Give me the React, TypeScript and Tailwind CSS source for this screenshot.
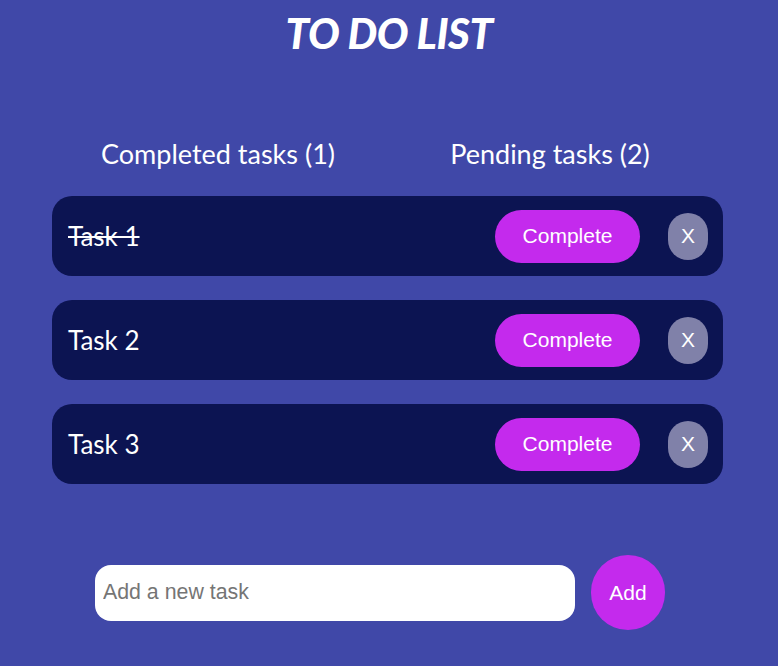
import React from "react";

const tasks = [
  { name: "Task 1", done: true },
  { name: "Task 2", done: false },
  { name: "Task 3", done: false },
];

export default function App() {
  return (
    <div className="min-h-[666px] bg-[#4048a8] text-white font-['Lato',sans-serif]">
      <h1 className="pt-[10px] text-center text-[42px] font-black italic leading-[46px] tracking-[-0.5px]">
        TO DO LIST
      </h1>
      <div className="ml-[52px] mr-[55px] mt-[82px]">
        <div className="flex gap-[32px] pl-[16px] text-[27px] leading-[32px]">
          <div className="w-[300px] text-center">Completed tasks (1)</div>
          <div className="w-[300px] text-center">Pending tasks (2)</div>
        </div>
        <div className="mt-[26px] flex flex-col gap-[24px]">
          {tasks.map((t) => (
            <div
              key={t.name}
              className="flex h-[80px] items-center rounded-[20px] bg-[#0c1452] pl-[16px] pr-[15px]"
            >
              <span
                className={
                  "flex-1 text-[26px] " + (t.done ? "line-through" : "")
                }
              >
                {t.name}
              </span>
              <button className="h-[53px] w-[145px] rounded-full bg-[#c42aed] font-['Liberation_Sans',Arial,sans-serif] text-[21px] text-white">
                Complete
              </button>
              <button className="ml-[28px] h-[47px] w-[40px] rounded-[20px] bg-[#8081a9] font-['Liberation_Sans',Arial,sans-serif] text-[21px] text-white">
                X
              </button>
            </div>
          ))}
        </div>
      </div>
      <div className="mt-[71px] flex items-center gap-[16px] pl-[95px]">
        <input
          placeholder="Add a new task"
          className="h-[56px] w-[480px] rounded-[16px] bg-white px-[8px] font-['Liberation_Sans',Arial,sans-serif] text-[21.33px] text-black outline-none placeholder:text-[#757575]"
        />
        <button className="h-[75px] w-[74px] rounded-full bg-[#c42aed] font-['Liberation_Sans',Arial,sans-serif] text-[21px] text-white">
          Add
        </button>
      </div>
    </div>
  );
}
